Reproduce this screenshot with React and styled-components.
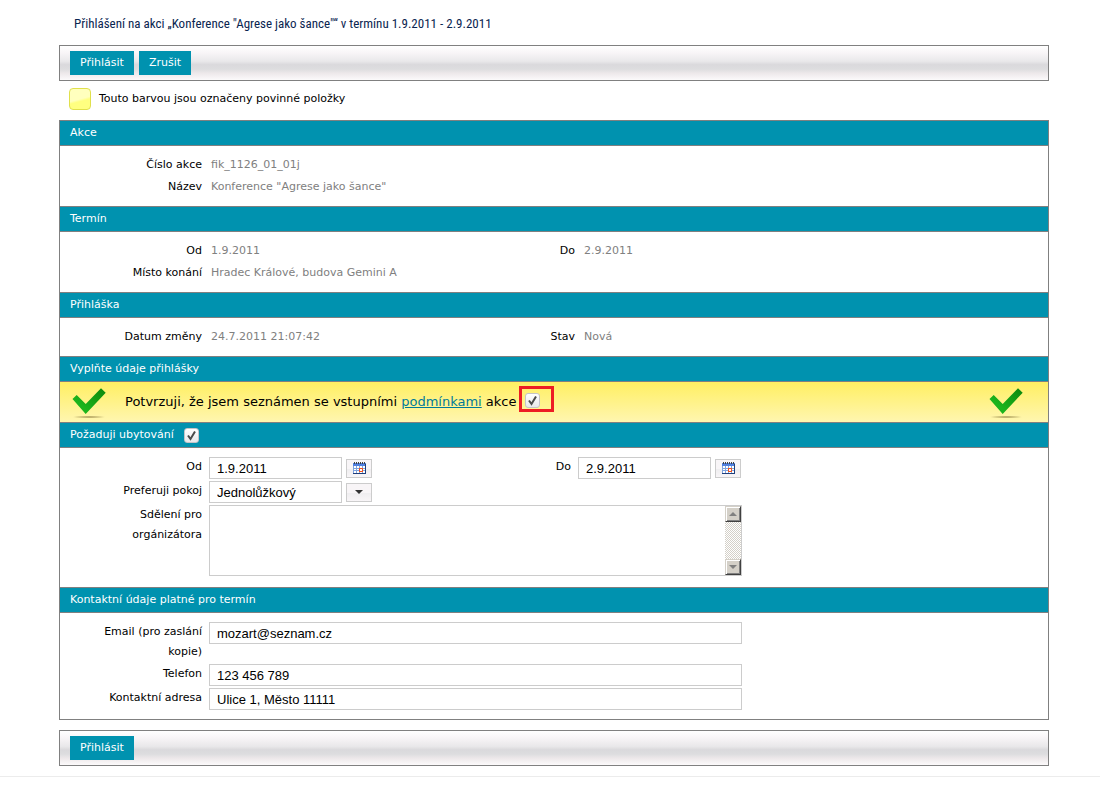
import React, { useState } from 'react';
import styled, { createGlobalStyle } from 'styled-components';

const GlobalStyle = createGlobalStyle`
  * {
    box-sizing: border-box;
  }

  body {
    margin: 0;
    background: #fff;
    color: #000;
    font-family: Verdana, 'DejaVu Sans', sans-serif;
    font-size: 11px;
    line-height: 20px;
  }
`;

const Page = styled.main`
  padding: 9px 51px 10px 59px;
`;

const Title = styled.h1`
  margin: 0 0 6px;
  padding-left: 15px;
  color: #0a2550;
  font-family: 'Roboto Condensed', 'Open Sans Condensed', Lato, sans-serif;
  font-size: 13px;
  font-weight: normal;
  line-height: 30px;
`;

const Toolbar = styled.div`
  display: flex;
  gap: 5px;
  padding: 5px 10px;
  border: 1px solid #808080;
  background: linear-gradient(
    #fff 0%,
    #f8f5f7 20%,
    #e9e8ea 45%,
    #dad9dc 55%,
    #dddddf 68%,
    #ede8ea 80%,
    #fcfafb 100%
  );
`;

const Button = styled.button`
  height: 24px;
  padding: 0 10px;
  border: 0;
  background: #0092af;
  color: #fff;
  font: inherit;
  cursor: pointer;
`;

const Legend = styled.div`
  display: flex;
  align-items: center;
  gap: 8px;
  height: 36px;
  margin-bottom: 3px;
  padding: 0 10px;
`;

const Swatch = styled.span`
  width: 22px;
  height: 22px;
  border: 1px solid #e0e04c;
  border-radius: 4px;
  background: linear-gradient(165deg, #ffffbe 50%, #ffff80 60%);
`;

const Panel = styled.form`
  margin-bottom: 10px;
  border: 1px solid #808080;
  border-top: 0;
`;

const SectionHeader = styled.h2`
  display: flex;
  align-items: center;
  gap: 10px;
  height: 26px;
  margin: 0;
  padding: 0 10px;
  border: solid #808080;
  border-width: 1px 0;
  background: #0092af;
  color: #fff;
  font-size: 11px;
  font-weight: normal;
`;

const SectionBody = styled.div`
  padding: 8px 0 ${({ $bottom }) => $bottom || 8}px;
`;

const Row = styled.div`
  display: grid;
  grid-template-columns: ${({ $first }) => $first || 373}px 1fr;
`;

const Field = styled.div`
  display: grid;
  grid-template-columns: 142px minmax(0, 1fr);
  align-items: start;
  column-gap: 7px;
  padding: 1px 0;
`;

const Label = styled.label`
  padding-left: 30px;
  text-align: right;
`;

const Value = styled.span`
  padding-left: 2px;
  color: #808080;
`;

const Controls = styled.div`
  display: flex;
  align-items: center;
  gap: 4px;
  width: 100%;
  max-width: 533px;
`;

const Input = styled.input`
  width: ${({ $short }) => ($short ? '133px' : '100%')};
  height: 22px;
  padding: 0 7px;
  border: 1px solid #ccc;
  background: #fff;
  color: #000;
  font-family: Arial, 'Liberation Sans', sans-serif;
  font-size: 13px;
`;

const Select = styled(Input).attrs({ as: 'select' })`
  appearance: none;
  border-radius: 0;
`;

const IconButton = styled.button`
  display: flex;
  align-items: center;
  justify-content: center;
  width: 26px;
  height: 19px;
  padding: 0;
  border: 1px solid #ccc;
  background: linear-gradient(#f8f5f7 50%, #eeedef 50%, #f8f5f7);
`;

const MessageBox = styled.div`
  display: flex;
  width: 100%;
  max-width: 533px;
  height: 71px;
  border: 1px solid #ccc;
`;

const Message = styled.textarea`
  flex: 1;
  min-width: 0;
  padding: 2px 7px;
  border: 0;
  outline: 0;
  resize: none;
  overflow: hidden;
  font-family: Arial, 'Liberation Sans', sans-serif;
  font-size: 13px;
`;

const ScrollTrack = styled.div`
  display: flex;
  flex-direction: column;
  justify-content: space-between;
  width: 16px;
  background: repeating-conic-gradient(#d4d0c8 0 25%, #fff 0 50%) 0 0 / 2px 2px;
`;

const ScrollButton = styled.button`
  display: flex;
  align-items: center;
  justify-content: center;
  width: 16px;
  height: 16px;
  padding: 0;
  border: solid;
  border-width: 1px;
  border-color: #d4d0c8 #404040 #404040 #d4d0c8;
  background: #d4d0c8;
  box-shadow: inset 1px 1px #fff, inset -1px -1px #808080;
`;

const Notice = styled.div`
  display: flex;
  align-items: center;
  gap: 19px;
  height: 40px;
  padding: 0 25px 0 12px;
  background: linear-gradient(#ffef62, #fff6b0);
  font-size: 13px;
`;

const NoticeText = styled.div`
  display: flex;
  align-items: center;
  flex: 1;
  gap: 2px;

  a {
    color: #007a99;
  }
`;

const Highlight = styled.span`
  display: flex;
  align-items: center;
  width: 35px;
  height: 26px;
  margin-bottom: 6px;
  padding: 2px 3px 0;
  border: 3px solid #ed1c24;
`;

const CheckboxWrap = styled.span`
  display: inline-grid;

  > * {
    grid-area: 1 / 1;
  }

  svg {
    pointer-events: none;
  }
`;

const CheckboxInput = styled.input`
  appearance: none;
  width: 15px;
  height: 15px;
  margin: 0;
  border: 1px solid #c4c4c8;
  border-radius: 3px;
  background: linear-gradient(#fff, #e8e8ea);
`;

const Footer = styled.footer`
  height: 29px;
  border-top: 1px solid #ececec;
`;

const Checkbox = ({ id }) => {
  const [checked, setChecked] = useState(true);

  return (
    <CheckboxWrap>
      <CheckboxInput
        id={id}
        type="checkbox"
        checked={checked}
        onChange={e => setChecked(e.target.checked)}
      />
      {checked && (
        <svg width="15" height="15" viewBox="0 0 15 15" aria-hidden="true">
          <path d="M4 7.5 L6.5 11 L11 3.5" fill="none" stroke="#4a4a4a" strokeWidth="2" />
        </svg>
      )}
    </CheckboxWrap>
  );
};

const Tick = () => (
  <svg width="34" height="34" viewBox="0 0 34 34" aria-hidden="true">
    <defs>
      <linearGradient id="tickFill" x1="0" y1="1" x2="1" y2="0">
        <stop offset="0.3" stopColor="#1cb41c" />
        <stop offset="1" stopColor="#0c860c" />
      </linearGradient>
      <radialGradient id="tickShadow">
        <stop offset="0" stopColor="#8a7a3c" stopOpacity="0.8" />
        <stop offset="1" stopColor="#8a7a3c" stopOpacity="0" />
      </radialGradient>
    </defs>
    <ellipse cx="17" cy="32" rx="17" ry="1.5" fill="url(#tickShadow)" />
    <path d="M0.5 14 L4.7 10 L13.7 19 L29 3.3 L33.7 7.7 L13.7 29 Z" fill="url(#tickFill)" />
  </svg>
);

const CalendarIcon = () => (
  <svg width="13" height="12" viewBox="0 0 13 12" shapeRendering="crispEdges" aria-hidden="true">
    <rect y="1" width="13" height="11" fill="#7fa3de" />
    <path d="M0 1h13v3h-13z" fill="#4f7fe0" />
    <path d="M12 2h1v10h-13v-1h12z" fill="#1f3f7c" />
    <path d="M1 0h1v2h-1zM3 0h1v2h-1zM5 0h1v2h-1zM7 0h1v2h-1zM9 0h1v2h-1zM11 0h1v2h-1z" fill="#444" />
    <path d="M1 4h2v2h-2zM4 4h2v2h-2zM7 4h2v2h-2zM10 4h2v2h-2zM1 7h2v1h-2zM4 7h2v1h-2zM10 7h2v1h-2zM1 9h2v2h-2zM4 9h2v2h-2zM7 9h2v2h-2zM10 9h2v2h-2z" fill="#fff" />
    <rect x="6" y="6" width="4" height="4" fill="#f0501c" />
    <rect x="7" y="7" width="2" height="2" fill="#fff" />
  </svg>
);

const Arrow = ({ up, color }) => (
  <svg width="8" height="4" viewBox="0 0 8 4" aria-hidden="true">
    <path d={up ? 'M0 4 L4 0 L8 4 Z' : 'M0 0 L4 4 L8 0 Z'} fill={color} />
  </svg>
);

const StaticField = ({ label, value }) => (
  <Field>
    <Label as="span">{label}</Label>
    <Value>{value}</Value>
  </Field>
);

const DateField = ({ id, label, value }) => (
  <Field>
    <Label htmlFor={id}>{label}</Label>
    <Controls>
      <Input $short id={id} defaultValue={value} />
      <IconButton type="button" aria-label={label}>
        <CalendarIcon />
      </IconButton>
    </Controls>
  </Field>
);

const TextField = ({ id, label, value }) => (
  <Field>
    <Label htmlFor={id}>{label}</Label>
    <Controls>
      <Input id={id} defaultValue={value} />
    </Controls>
  </Field>
);

const App = () => (
  <>
    <GlobalStyle />
    <Page>
      <Title>Přihlášení na akci „Konference "Agrese jako šance"“ v termínu 1.9.2011 - 2.9.2011</Title>
      <Toolbar>
        <Button type="submit" form="prihlaska">Přihlásit</Button>
        <Button type="button">Zrušit</Button>
      </Toolbar>
      <Legend>
        <Swatch />
        Touto barvou jsou označeny povinné položky
      </Legend>

      <Panel id="prihlaska" onSubmit={e => e.preventDefault()}>
        <SectionHeader>Akce</SectionHeader>
        <SectionBody>
          <StaticField label="Číslo akce" value="fik_1126_01_01j" />
          <StaticField label="Název" value={'Konference "Agrese jako šance"'} />
        </SectionBody>

        <SectionHeader>Termín</SectionHeader>
        <SectionBody>
          <Row>
            <StaticField label="Od" value="1.9.2011" />
            <StaticField label="Do" value="2.9.2011" />
          </Row>
          <StaticField label="Místo konání" value="Hradec Králové, budova Gemini A" />
        </SectionBody>

        <SectionHeader>Přihláška</SectionHeader>
        <SectionBody>
          <Row>
            <StaticField label="Datum změny" value="24.7.2011 21:07:42" />
            <StaticField label="Stav" value="Nová" />
          </Row>
        </SectionBody>

        <SectionHeader>Vyplňte údaje přihlášky</SectionHeader>
        <Notice>
          <Tick />
          <NoticeText>
            <label htmlFor="podminky">
              Potvrzuji, že jsem seznámen se vstupními <a href="#podminky">podmínkami</a> akce
            </label>
            <Highlight>
              <Checkbox id="podminky" />
            </Highlight>
          </NoticeText>
          <Tick />
        </Notice>

        <SectionHeader>
          <label htmlFor="ubytovani">Požaduji ubytování</label>
          <Checkbox id="ubytovani" />
        </SectionHeader>
        <SectionBody $bottom={10}>
          <Row $first={369}>
            <DateField id="od" label="Od" value="1.9.2011" />
            <DateField id="do" label="Do" value="2.9.2011" />
          </Row>
          <Field>
            <Label htmlFor="pokoj">Preferuji pokoj</Label>
            <Controls>
              <Select $short id="pokoj">
                <option>Jednolůžkový</option>
              </Select>
              <IconButton type="button" aria-label="Preferuji pokoj">
                <Arrow color="#333" />
              </IconButton>
            </Controls>
          </Field>
          <Field>
            <Label htmlFor="sdeleni">Sdělení pro orgánizátora</Label>
            <MessageBox>
              <Message id="sdeleni" />
              <ScrollTrack>
                <ScrollButton type="button" aria-label="Nahoru">
                  <Arrow up color="#808080" />
                </ScrollButton>
                <ScrollButton type="button" aria-label="Dolů">
                  <Arrow color="#808080" />
                </ScrollButton>
              </ScrollTrack>
            </MessageBox>
          </Field>
        </SectionBody>

        <SectionHeader>Kontaktní údaje platné pro termín</SectionHeader>
        <SectionBody>
          <TextField id="email" label="Email (pro zaslání kopie)" value="mozart@seznam.cz" />
          <TextField id="telefon" label="Telefon" value="123 456 789" />
          <TextField id="adresa" label="Kontaktní adresa" value="Ulice 1, Město 11111" />
        </SectionBody>
      </Panel>

      <Toolbar>
        <Button type="submit" form="prihlaska">Přihlásit</Button>
      </Toolbar>
    </Page>
    <Footer />
  </>
);

export default App;
